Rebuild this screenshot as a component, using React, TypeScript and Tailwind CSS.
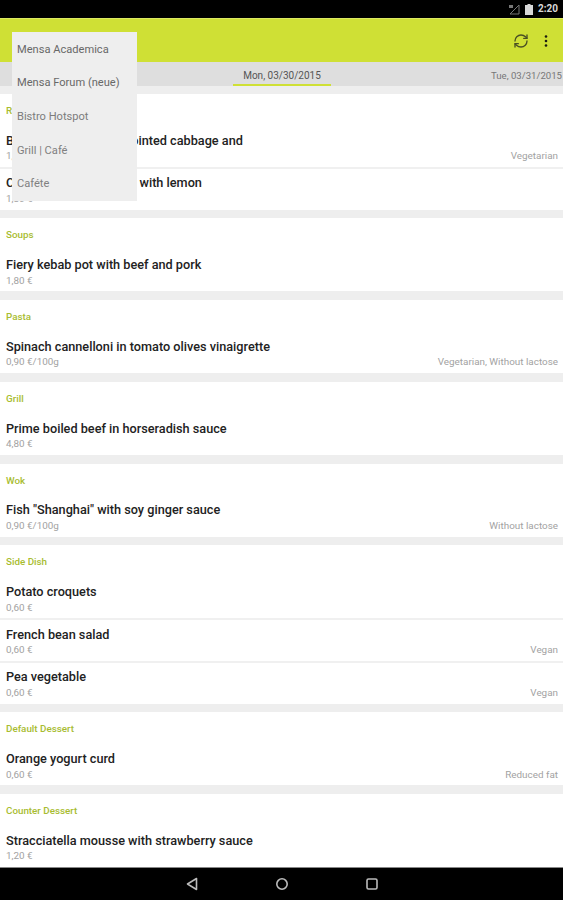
import { RefreshCw } from "lucide-react"

interface Dish {
  name: string
  price: string
  note?: string
}

interface Section {
  title: string
  dishes: Dish[]
}

const SECTIONS: Section[] = [
  {
    title: "Regional",
    dishes: [
      { name: "Boiled roulades with pointed cabbage and", price: "1,80 €", note: "Vegetarian" },
      { name: "Chicken breast roulade with lemon", price: "1,80 €" },
    ],
  },
  { title: "Soups", dishes: [{ name: "Fiery kebab pot with beef and pork", price: "1,80 €" }] },
  {
    title: "Pasta",
    dishes: [
      {
        name: "Spinach cannelloni in tomato olives vinaigrette",
        price: "0,90 €/100g",
        note: "Vegetarian, Without lactose",
      },
    ],
  },
  { title: "Grill", dishes: [{ name: "Prime boiled beef in horseradish sauce", price: "4,80 €" }] },
  {
    title: "Wok",
    dishes: [
      { name: 'Fish "Shanghai" with soy ginger sauce', price: "0,90 €/100g", note: "Without lactose" },
    ],
  },
  {
    title: "Side Dish",
    dishes: [
      { name: "Potato croquets", price: "0,60 €" },
      { name: "French bean salad", price: "0,60 €", note: "Vegan" },
      { name: "Pea vegetable", price: "0,60 €", note: "Vegan" },
    ],
  },
  {
    title: "Default Dessert",
    dishes: [{ name: "Orange yogurt curd", price: "0,60 €", note: "Reduced fat" }],
  },
  {
    title: "Counter Dessert",
    dishes: [{ name: "Stracciatella mousse with strawberry sauce", price: "1,20 €" }],
  },
]

const MENSAS = [
  { name: "Mensa Academica", color: "text-[#686868]" },
  { name: "Mensa Forum (neue)", color: "text-[#686868]" },
  { name: "Bistro Hotspot", color: "text-[#7c7c7c]" },
  { name: "Grill | Café", color: "text-[#808080]" },
  { name: "Caféte", color: "text-[#808080]" },
]

function StatusBar() {
  return (
    <div className="h-[18px] shrink-0 bg-black flex items-center justify-end pr-[5px] gap-[5px] text-[#d8d8d8]">
      <svg width="12" height="11" viewBox="0 0 12 11" className="text-[#777]">
        <path d="M11 1v9H2z" fill="none" stroke="currentColor" strokeWidth="1" />
        <path d="M1 1h4v3H1z" fill="currentColor" />
      </svg>
      <svg width="8" height="11" viewBox="0 0 8 11">
        <path d="M2.5 0h3v1H8v10H0V1h2.5z" fill="currentColor" />
      </svg>
      <span className="text-[10px] font-bold leading-none">2:20</span>
    </div>
  )
}

function Toolbar() {
  return (
    <div className="h-[44px] shrink-0 bg-[#cfe035] border-t border-[#dcea62] flex items-center justify-end pr-[15px] gap-[15px] text-[#4a5024]">
      <RefreshCw className="w-[16px] h-[16px]" strokeWidth={2} />
      <svg width="4" height="12" viewBox="0 0 4 12">
        <circle cx="2" cy="1.5" r="1.3" fill="#1c1c10" />
        <circle cx="2" cy="6" r="1.3" fill="#1c1c10" />
        <circle cx="2" cy="10.5" r="1.3" fill="#1c1c10" />
      </svg>
    </div>
  )
}

function DateTabs() {
  return (
    <div className="h-[24px] shrink-0 bg-[#dedede] flex items-start justify-end relative">
      <div className="absolute left-[233px] top-0 w-[98px] h-[24px] border-b-2 border-[#cfe035] text-center text-[10px] leading-[27px] text-[#555]">
        Mon, 03/30/2015
      </div>
      <span className="pr-[1px] text-[9.6px] leading-[27px] text-[#777]">Tue, 03/31/2015</span>
    </div>
  )
}

function DishRow({ dish, first }: { dish: Dish; first: boolean }) {
  return (
    <div className={`h-[42.67px] pl-[6px] pr-[5px] ${first ? "pt-[8.5px]" : "border-t-2 border-[#f0f0f0] pt-[6.5px]"}`}>
      <div className="text-[12.7px] font-medium leading-[16px] text-[#222]">{dish.name}</div>
      <div className="flex justify-between text-[9.9px] leading-[12px] text-[#a2a2a2] mt-[1.5px]">
        <span>{dish.price}</span>
        {dish.note && <span>{dish.note}</span>}
      </div>
    </div>
  )
}

export default function App() {
  return (
    <div className="relative w-[563px] h-[900px] overflow-hidden flex flex-col bg-[#eeeeee] font-['Roboto',sans-serif]">
      <StatusBar />
      <Toolbar />
      <DateTabs />
      <div className="flex-1 min-h-0 overflow-hidden pt-[8px] flex flex-col gap-[8.75px]">
        {SECTIONS.map((section) => (
          <div key={section.title} className="bg-white shrink-0">
            <div className="h-[30.33px] px-[6px] pt-[11px] text-[9.8px] font-medium leading-[12px] text-[#a8bc30]">
              {section.title}
            </div>
            {section.dishes.map((dish, i) => (
              <DishRow key={dish.name} dish={dish} first={i === 0} />
            ))}
          </div>
        ))}
      </div>
      <div className="h-[33px] shrink-0 bg-black border-t border-[#888] flex items-center justify-center gap-[77px] text-[#bbb] z-10">
        <svg width="12" height="14" viewBox="0 0 12 14">
          <path d="M10.5 1.5v11L1.5 7z" fill="none" stroke="currentColor" strokeWidth="1.6" strokeLinejoin="round" />
        </svg>
        <svg width="14" height="14" viewBox="0 0 14 14">
          <circle cx="7" cy="7" r="5.2" fill="none" stroke="currentColor" strokeWidth="1.6" />
        </svg>
        <svg width="12" height="12" viewBox="0 0 12 12">
          <rect x="1" y="1" width="10" height="10" rx="1.5" fill="none" stroke="currentColor" strokeWidth="1.6" />
        </svg>
      </div>
      {/* mensa dropdown */}
      <div className="absolute left-[12px] top-[32px] w-[125px] h-[169px] bg-[#eeeeee] pl-[5px] pt-[1px] flex flex-col text-[11.1px]">
        {MENSAS.map((m) => (
          <div key={m.name} className={`h-[33.7px] shrink-0 flex items-center ${m.color}`}>
            {m.name}
          </div>
        ))}
      </div>
    </div>
  )
}
